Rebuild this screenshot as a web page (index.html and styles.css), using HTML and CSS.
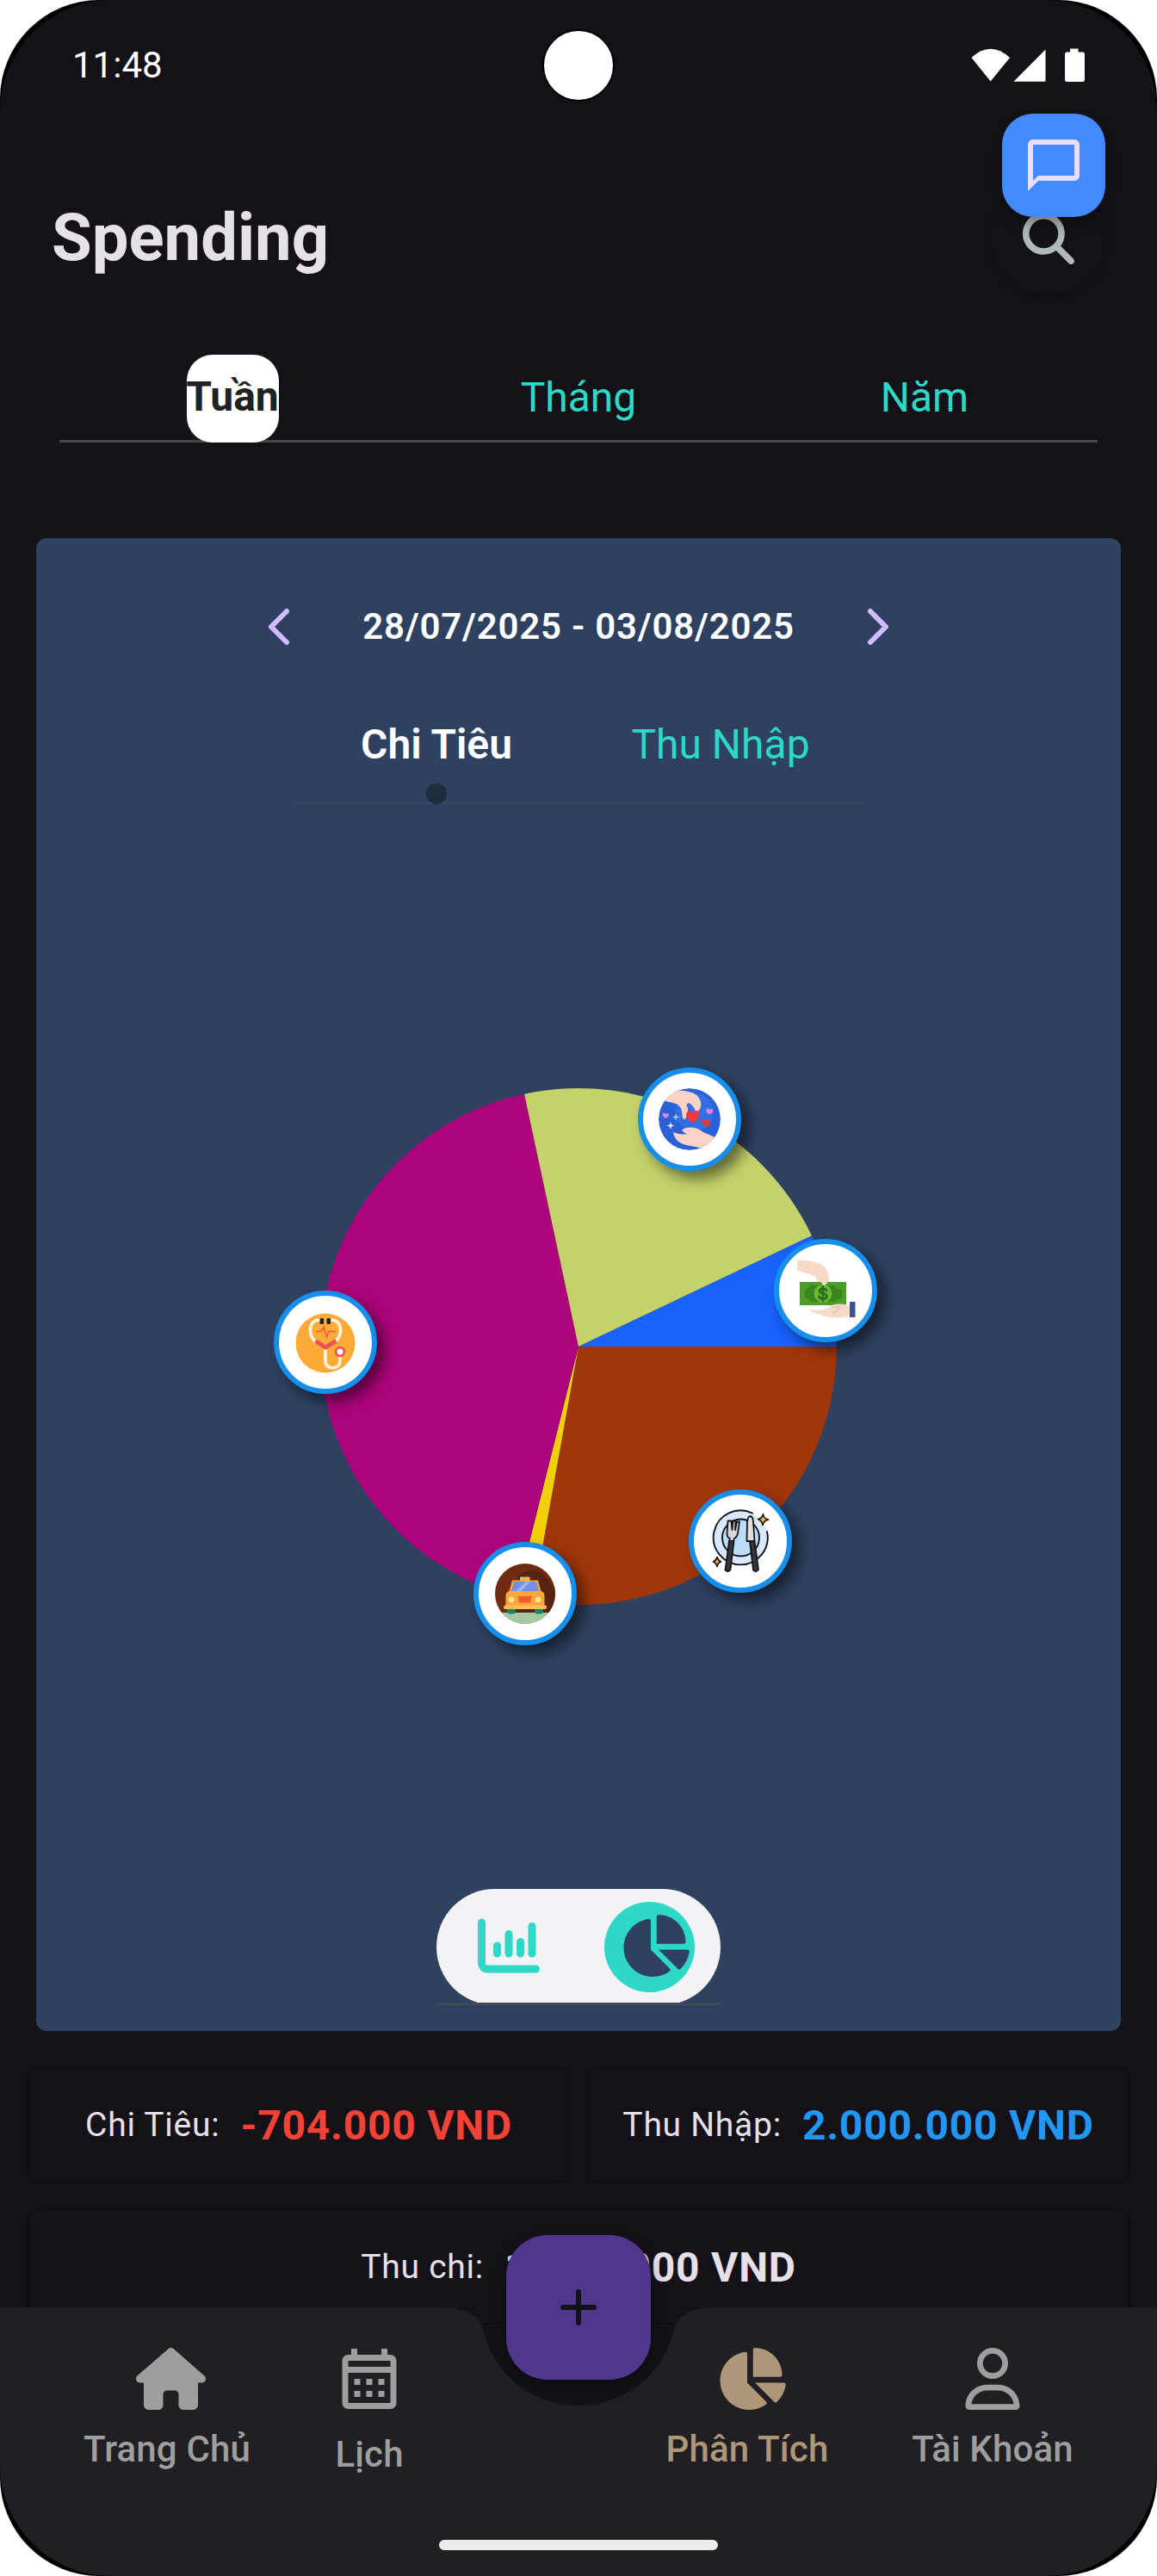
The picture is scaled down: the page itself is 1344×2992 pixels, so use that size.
FILE: index.html
```html
<!DOCTYPE html>
<html lang="vi">
<head>
<meta charset="utf-8">
<title>Spending</title>
<link rel="stylesheet" href="styles.css">
</head>
<body>
<div class="phone">
<div class="screen">

  <header class="status">
    <span class="clock">11:48</span>
    <svg class="status-icons" viewBox="0 0 132 40" width="132" height="40">
      <path d="M0.5 11.500Q22.500 -9 45 11.500L22.700 39.200Z" transform="translate(0 -.6)"/>
      <path d="M49.500 38.800L86.500 1.500V38.800Z"/>
      <path d="M115 .5h9.500v4h5.500a2.300 2.300 0 0 1 2 2.300v30a2.300 2.300 0 0 1-2.300 2.300h-18.400a2.300 2.300 0 0 1-2.300-2.300v-30a2.300 2.300 0 0 1 2.300-2.300h3.700z"/>
    </svg>
    <i class="camera"></i>
  </header>

  <div class="title-row">
    <h1>Spending</h1>
    <button class="search">
      <svg viewBox="0 0 512 512" width="60" height="60"><path d="M416 208c0 45.900-14.900 88.300-40 122.700L502.600 457.400c12.500 12.500 12.500 32.800 0 45.300s-32.800 12.500-45.300 0L330.700 376c-34.400 25.200-76.800 40-122.700 40C93.100 416 0 322.900 0 208S93.100 0 208 0S416 93.100 416 208zM208 352a144 144 0 1 0 0-288 144 144 0 1 0 0 288z"/></svg>
    </button>
  </div>

  <nav class="period-tabs">
    <div class="tab"><span class="pill">Tuần</span></div>
    <div class="tab">Tháng</div>
    <div class="tab">Năm</div>
  </nav>

  <section class="chart-card">
    <div class="date-row">
      <svg viewBox="0 0 26 44" width="26" height="44"><path d="M22 4L4 22L22 40"/></svg>
      <span class="range">28/07/2025 - 03/08/2025</span>
      <svg viewBox="0 0 26 44" width="26" height="44"><path d="M4 4L22 22L4 40"/></svg>
    </div>
    <div class="type-tabs">
      <div class="type on">Chi Tiêu</div>
      <div class="type">Thu Nhập</div>
      <i class="dot"></i>
    </div>

    <div class="pie-area">
      <svg class="pie" viewBox="-300 -300 600 600" width="600" height="600">
        <path fill="#a0370b" d="M0 0L300 0A300 300 0 0 1 -53.100 295.300Z"/>
        <path fill="#f3cf0a" d="M0 0L-53.100 295.300A300 300 0 0 1 -73.100 291Z"/>
        <path fill="#ad047b" d="M0 0L-73.100 291A300 300 0 0 1 -62.900 -293.300Z"/>
        <path fill="#c5d26a" d="M0 0L-62.900 -293.300A300 300 0 0 1 271 -128.700Z"/>
        <path fill="#1962fe" d="M0 0L271 -128.700A300 300 0 0 1 300 0Z"/>
      </svg>

      <div class="badge gift">
        <svg viewBox="0 0 72 72" width="72" height="72">
          <defs><clipPath id="disc"><circle cx="36" cy="36" r="36"/></clipPath></defs>
          <g clip-path="url(#disc)">
            <circle cx="36" cy="36" r="36" fill="#2a60d8"/>
            <circle cx="42" cy="28" r="22" fill="#3d7cea" opacity=".55"/>
            <path fill="#fbd3c4" d="M6 12C14 4 22 2 30 3C40 4 47 8 49 16C50 23 47 27 43 29C43 25 41 21 37 18C34 16 31 19 34 23C34 29 33 35 30 36C27 36 28 28 26 23C22 17 16 17 8 15Z"/>
            <path fill="#fbd3c4" d="M17 51C23 53 27 54 33 53C27 50 26 48 29 47C37 44 46 46 52 51L68 58L54 72C46 67 38 68 29 65C23 63 18 58 17 51Z"/>
            <path fill="#fff" d="M14 39l1 3.500 3.500 1-3.500 1-1 3.500-1-3.500-3.500-1 3.500-1z"/>
            <path fill="#aecbff" d="M20 29l1 3.500 3.500 1-3.500 1-1 3.500-1-3.500-3.500-1 3.500-1z"/>
          </g>
          <path fill="#ee3b40" d="M40 40c-6-3-8-6-8-9c0-6 6-6 8-2c2-5 8-3 7 2c0 4-2 7-7 9z"/>
          <path fill="#e23a35" d="M56 45c-4-2-6-4-6-7c1-3 4-2 5 0c2-3 6-1 5 2c0 2-2 4-4 5z"/>
          <path fill="#e583dc" d="M58 30c-3-2-3-4-2-6c1-1 3 0 3 1c2-2 4-1 4 1c0 3-2 4-5 4zM8 35c-3-2-4-4-3-6c1-1 3 0 3 1c2-2 4-1 4 1c0 2-2 3-4 4z"/>
        </svg>
      </div>

      <div class="badge money">
        <svg viewBox="0 0 72 72" width="72" height="72">
          <path fill="#f7d9c8" d="M3 1C12 0 22 2 30 5C36 8 40 15 40 23C40 27 38 30 34 30C29 28 26 25 24 20C16 16 10 14 3 13Z"/>
          <path fill="#4c9f26" d="M6 26h54v27H6z"/>
          <path fill="#3b8420" d="M12 35q5-1 6-5h29q1 4 8 5v10q-6 1-7 4H18q-1-4-6-5z"/>
          <circle cx="33" cy="39.500" r="10.500" fill="#68b832"/>
          <path fill="none" stroke="#276e1c" stroke-width="2.600" stroke-linecap="round" d="M37 36c-1-3-8-3-8 .5c0 4 8.500 2 8.500 6c0 4-8.500 4-9 0M33 31v17"/>
          <path fill="#f7d9c8" d="M31 26q2 6 5 3q3-2 2-6z"/>
          <path fill="#f7d9c8" d="M16 58C28 60 38 58 43 53C50 51 57 51 64 54V66C52 67 46 69 37 66C30 64 22 62 16 58Z"/>
          <path fill="none" stroke="#e8bfab" stroke-width="1.200" d="M45 56q5-1 7-2q0 5-8 9"/>
          <path fill="#40548c" d="M64 49h6.500v18H64z"/>
        </svg>
      </div>

      <div class="badge health">
        <svg viewBox="0 0 72 72" width="72" height="72">
          <circle cx="36" cy="37" r="34.500" fill="#fdab38"/>
          <path fill="none" stroke="#fff3dc" stroke-width="3.600" stroke-linecap="round" d="M30 10.500C22 9 18 16 18.500 24C19 29 21 32 25 36M42 10.500C50 9 54 16 53.500 24C53 29 51 32 47 36M36 45V58C36 68 53 69 53 57V50"/>
          <path fill="none" stroke="#ee5350" stroke-width="5" stroke-linejoin="round" d="M24.500 34.500L36 42L48.500 34.500"/>
          <path fill="none" stroke="#ee5b38" stroke-width="1.700" d="M25 23.500h6l3-5l3.500 11l2.500-6h8"/>
          <rect x="29.500" y="8" width="4.600" height="7" rx="1.600" fill="#1f2226"/><rect x="37.500" y="8" width="4.600" height="7" rx="1.600" fill="#1f2226"/>
          <circle cx="53" cy="47" r="4.800" fill="#fff" stroke="#ee5350" stroke-width="2.800"/>
        </svg>
      </div>

      <div class="badge taxi">
        <svg viewBox="0 0 72 72" width="72" height="72">
          <defs><clipPath id="road"><circle cx="36" cy="36" r="35"/></clipPath></defs>
          <g clip-path="url(#road)">
            <path fill="#6f2c13" d="M0 0h72v72H0z"/>
            <path fill="#532311" d="M28 16Q40 4 56 12L72 30V58H20z" opacity=".8"/>
            <path fill="#a7c9a2" d="M0 58h72v14H0z"/>
          </g>
          <rect x="15" y="52" width="10" height="7.500" rx="3" fill="#168467"/><rect x="47" y="52" width="10" height="7.500" rx="3" fill="#168467"/>
          <rect x="30" y="16.500" width="11.500" height="5" rx="1" fill="#e8b55a"/>
          <path fill="#f5a43c" d="M21 20.500H51L55 35H17Z"/>
          <path fill="#7690e4" d="M23 22H49L52 33.500H19.500Z"/>
          <path fill="#a0b3f3" d="M37 22h5L31 33.500h-6z"/>
          <rect x="13.500" y="33" width="45" height="20" rx="5" fill="#fba63a"/>
          <path fill="#ee5b2e" d="M28 39h16l-2 7.500H29z"/>
          <circle cx="20" cy="43" r="3.300" fill="#ffe690"/><circle cx="51" cy="43" r="3.300" fill="#ffe690"/>
          <rect x="11" y="49.500" width="50" height="4.500" rx="2.200" fill="#fcbe54"/>
        </svg>
      </div>

      <div class="badge food">
        <svg viewBox="0 0 72 72" width="72" height="72" stroke="#111418" stroke-linejoin="round" stroke-linecap="round">
          <circle cx="36.500" cy="32" r="31" fill="#d8e9fb" stroke="none"/>
          <path fill="none" stroke-width="1.900" d="M50 3.500A31.500 31.500 0 1 0 67 25"/>
          <circle cx="36.500" cy="32" r="21.500" fill="#bcdcfc" stroke-width="1.900"/>
          <path fill="#dcd6da" stroke-width="1.800" d="M21.500 12.500L20.500 27Q20.500 32 24 33L23 36H28L29 33Q32.500 31 33 27L35 13.500H32L30 23L30.500 12.500H27.500L26.500 23L25.500 12.500Z"/>
          <path fill="#38383c" stroke-width="1.800" d="M23 36H28.500L24.500 69Q22 73 18.500 69.500Z"/>
          <path fill="#e4dde1" stroke-width="1.800" d="M43.500 36L44 13Q45 7 47.500 7Q50.500 7.500 51 13L52.500 36Z"/>
          <path fill="#38383c" stroke-width="1.800" d="M47 36H52.500L57 69Q54 73 51 69.500Z"/>
          <path fill="#f6ad36" stroke-width="1.600" d="M62.500 4.500Q63 9.500 68.500 11Q63.500 12 62 17.500Q61 12 56.500 10.500Q61.500 9.500 62.500 4.500ZM9 54.500Q10 58.500 13.500 60Q10 61 9 65.500Q8 61 4.500 60Q8 58.500 9 54.500Z"/>
        </svg>
      </div>
    </div>

    <div class="view-toggle">
      <div class="view">
        <svg viewBox="0 0 512 512" width="72" height="72"><path fill="none" stroke="#2dd9c6" stroke-width="64" stroke-linecap="round" d="M32 64V400A48 48 0 0 0 80 448H480M160 256V320M256 160V320M352 224V320M448 96V320"/></svg>
      </div>
      <div class="view on">
        <svg viewBox="0 0 512 512" width="72" height="72" fill="#2e4160"><path d="M304 240V16.600c0-9 7-16.600 16-16.600C443.700 0 544 100.300 544 224c0 9-7.600 16-16.600 16H304zM32 272C32 150.700 122.100 50.300 239 34.300c9.200-1.300 17 6.100 17 15.400V288L412.500 444.500c6.700 6.700 6.200 17.700-1.500 23.100C371.800 495.600 323.800 512 272 512C139.500 512 32 404.600 32 272zm526.400 16c9.300 0 16.600 7.800 15.400 17c-7.700 55.900-34.600 105.600-73.900 142.300c-6 5.600-15.400 5.200-21.200-.7L320 288H558.400z"/></svg>
      </div>
    </div>
  </section>

  <section class="totals">
    <div class="total"><span class="label">Chi Tiêu:</span><b class="spent">-704.000 VND</b></div>
    <div class="total"><span class="label">Thu Nhập:</span><b class="earned">2.000.000 VND</b></div>
    <div class="total wide"><span class="label">Thu chi:</span><b>1.296.000 VND</b></div>
  </section>

  <button class="chat">
    <svg viewBox="0 0 24 24" width="72" height="72"><path d="M20 2H4c-1.100 0-2 .9-2 2v18l4-4h14c1.100 0 2-.9 2-2V4c0-1.100-.9-2-2-2zm0 14H6l-2 2V4h16v12z"/></svg>
  </button>

  <footer class="bottom">
    <svg class="bar-shape" viewBox="0 0 1344 312" width="1344" height="312"><path d="M0 0H510Q555 0 560.900 25.600A114 114 0 0 0 783.100 25.600Q789 0 834 0H1344V312H0Z"/></svg>
    <div class="nav">
      <div class="item">
        <svg viewBox="0 0 512 512" width="72" height="72"><path d="M575.800 255.500c0 18-15 32.100-32 32.100h-32l.7 160.200c0 2.700-.2 5.400-.5 8.100V472c0 22.100-17.900 40-40 40H456c-1.100 0-2.200 0-3.300-.1c-1.400 .1-2.800 .1-4.200 .1H416 392c-22.100 0-40-17.900-40-40V448 384c0-17.700-14.300-32-32-32H256c-17.700 0-32 14.300-32 32v64 24c0 22.100-17.900 40-40 40H160 128.100c-1.500 0-3-.1-4.500-.2c-1.200 .1-2.400 .2-3.600 .2H104c-22.100 0-40-17.900-40-40V360c0-.9 0-1.900 .1-2.800V287.600H32c-18 0-32-14-32-32.100c0-9 3-17 10-24L266.400 8c7-7 15-8 22-8s15 2 21 7L564.800 231.500c8 7 12 15 11 24z"/></svg>
        <span>Trang Chủ</span>
      </div>
      <div class="item">
        <svg viewBox="0 0 24 24" width="84" height="84"><path d="M19 4h-1V2h-2v2H8V2H6v2H5c-1.110 0-1.990.9-1.990 2L3 20a2 2 0 0 0 2 2h14c1.100 0 2-.9 2-2V6c0-1.100-.9-2-2-2zm0 16H5V10h14v10zm0-12H5V6h14v2zM9 14H7v-2h2v2zm4 0h-2v-2h2v2zm4 0h-2v-2h2v2zm-8 4H7v-2h2v2zm4 0h-2v-2h2v2zm4 0h-2v-2h2v2z"/></svg>
        <span>Lịch</span>
      </div>
      <div class="item active">
        <svg viewBox="0 0 512 512" width="72" height="72"><path d="M304 240V16.600c0-9 7-16.600 16-16.600C443.700 0 544 100.300 544 224c0 9-7.600 16-16.600 16H304zM32 272C32 150.700 122.100 50.300 239 34.300c9.200-1.300 17 6.100 17 15.400V288L412.500 444.500c6.700 6.700 6.200 17.700-1.500 23.100C371.800 495.600 323.800 512 272 512C139.500 512 32 404.600 32 272zm526.400 16c9.300 0 16.600 7.800 15.400 17c-7.700 55.900-34.600 105.600-73.900 142.300c-6 5.600-15.400 5.200-21.200-.7L320 288H558.400z"/></svg>
        <span>Phân Tích</span>
      </div>
      <div class="item">
        <svg viewBox="-32 0 512 512" width="72" height="72"><path d="M304 128a80 80 0 1 0 -160 0 80 80 0 1 0 160 0zM96 128a128 128 0 1 1 256 0A128 128 0 1 1 96 128zM49.300 464H398.700c-8.900-63.300-63.300-112-129-112H178.300c-65.700 0-120.100 48.700-129 112zM0 482.300C0 383.800 79.800 304 178.300 304h91.400C368.200 304 448 383.800 448 482.300c0 16.400-13.300 29.700-29.700 29.700H29.700C13.300 512 0 498.700 0 482.300z"/></svg>
        <span>Tài Khoản</span>
      </div>
    </div>
    <button class="add">
      <svg viewBox="0 0 42 42" width="42" height="42"><path d="M3 21H39M21 3V39"/></svg>
    </button>
    <i class="home-bar"></i>
  </footer>

</div>
</div>
</body>
</html>
```
FILE: styles.css
```css
* { box-sizing: border-box; }
body { margin: 0; background: #fff; font-family: Roboto, "Liberation Sans", sans-serif; }
svg { display: block; overflow: visible; flex: none; }
button { border: 0; padding: 0; font: inherit; display: flex; align-items: center; justify-content: center; }
h1 { margin: 0; }

.phone { width: 1344px; height: 2992px; background: #000; border-radius: 115px; overflow: hidden; }
.screen { position: relative; width: 1344px; height: 2992px; background: #141218; border-radius: 129px; overflow: hidden; color: #e6e0e9; }

.status { position: relative; height: 151px; padding: 0 84px 0 84px; display: flex; align-items: center; justify-content: space-between; }
.clock { font-size: 42px; color: #fff; }
.status-icons { fill: #fff; }
.camera { position: absolute; left: 630px; top: 34px; width: 84px; height: 84px; border: 2px solid #000; border-radius: 50%; background: #fff; }

.title-row { height: 252px; padding: 0 60px; display: flex; align-items: center; justify-content: space-between; }
h1 { font-size: 76px; line-height: 84px; font-weight: 700; padding-bottom: 3px; }
.search { width: 132px; height: 132px; border-radius: 50%; background: #141218; box-shadow: 0 3px 9px rgba(0,0,0,.22); }
.search svg { fill: #b0b8b9; }

.period-tabs { height: 102px; margin: 9px 69px 0; display: grid; grid-template-columns: repeat(3, 1fr); border-bottom: 3px solid #49454f; }
.tab { height: 99px; display: flex; align-items: center; justify-content: center; font-size: 48px; color: #2dd9c6; }
.pill { height: 102px; margin-bottom: -3px; line-height: 98px; border-radius: 30px; background: #fff; color: #212121; font-weight: 700; width: 107px; display: flex; justify-content: center; }

.chart-card { height: 1734px; margin: 111px 42px 0; padding: 33px 0 30px; background: #2e4160; border-radius: 12px; display: flex; flex-direction: column; align-items: center; }
.date-row { width: 722px; height: 139px; display: flex; align-items: center; justify-content: space-between; }
.date-row path { fill: none; stroke: #d0bcff; stroke-width: 6; stroke-linecap: round; stroke-linejoin: round; }
.range { font-size: 42px; font-weight: 600; letter-spacing: .75px; color: #fff; }
.type-tabs { position: relative; width: 660px; height: 137px; display: grid; grid-template-columns: 1fr 1fr; border-bottom: 3px solid #3a455f; }
.type { display: flex; align-items: center; justify-content: center; font-size: 48px; color: #2dd9c6; }
.type.on { color: #fff; font-weight: 600; }
.dot { position: absolute; left: 153px; bottom: -3px; width: 24px; height: 24px; border-radius: 50%; background: #1e2c3d; }

.pie-area { position: relative; width: 1260px; height: 1260px; display: flex; align-items: center; justify-content: center; }
.badge { position: absolute; width: 120px; height: 120px; margin: -60px 0 0 -60px; border-radius: 50%; border: 6px solid #168fec; background: #fff; display: flex; align-items: center; justify-content: center; box-shadow: 9px 9px 16px rgba(0,0,0,.5); }
.gift { left: 759px; top: 366px; }
.money { left: 917px; top: 565px; }
.health { left: 336px; top: 625px; }
.taxi { left: 568px; top: 917px; }
.food { left: 818px; top: 856px; }

.view-toggle { position: relative; width: 330px; height: 135px; display: grid; grid-template-columns: 1fr 1fr; border-radius: 68px; background: #f2f2f7; }
.view-toggle::after { content: ""; position: absolute; left: 0; right: 0; bottom: 0; height: 3px; background: #454659; }
.view { width: 105px; height: 105px; margin: 15px auto; border-radius: 50%; display: flex; align-items: center; justify-content: center; padding: 0 0 4px 3px; }
.view.on { background: #2dd9c6; }

.totals { margin: 42px 31px 0; display: grid; grid-template-columns: 1fr 1fr; gap: 31px 18px; }
.total { height: 134px; border: 2px solid #0f0e12; border-radius: 12px; display: flex; align-items: center; justify-content: center; gap: 24px; letter-spacing: .75px; white-space: nowrap; }
.wide { grid-column: 1 / 3; }
.label { font-size: 39px; }
.total b { font-size: 48px; font-weight: 700; }
.total .spent { color: #f44336; }
.total .earned { color: #2196f3; }

.chat { position: absolute; left: 1164px; top: 132px; width: 120px; height: 120px; border-radius: 36px; background: #448aff; box-shadow: 0 9px 15px rgba(0,0,0,.3); }
.chat svg { fill: #eaddff; }

.bottom { position: absolute; left: 0; bottom: 0; width: 1344px; height: 312px; }
.bar-shape { position: absolute; inset: 0; fill: #201f24; }
.nav { position: relative; height: 312px; display: grid; grid-template-columns: 388px 82px 213px 370px 200px; align-items: start; }
.item:nth-child(3) { grid-column: 4; }
.item { height: 236px; display: flex; flex-direction: column; align-items: center; justify-content: center; gap: 21px; color: #9e9e9e; fill: #9e9e9e; font-size: 42px; line-height: 49px; font-weight: 500; letter-spacing: .15px; white-space: nowrap; }
.active { color: #ae9779; fill: #ae9779; }
.add { position: absolute; left: 588px; top: -84px; width: 168px; height: 168px; border-radius: 48px; background: #4f378b; box-shadow: 0 9px 18px rgba(0,0,0,.4); }
.add path { stroke: #141218; stroke-width: 6; stroke-linecap: round; }
.home-bar { position: absolute; left: 510px; bottom: 30px; width: 324px; height: 12px; border-radius: 6px; background: #ececec; }
```
